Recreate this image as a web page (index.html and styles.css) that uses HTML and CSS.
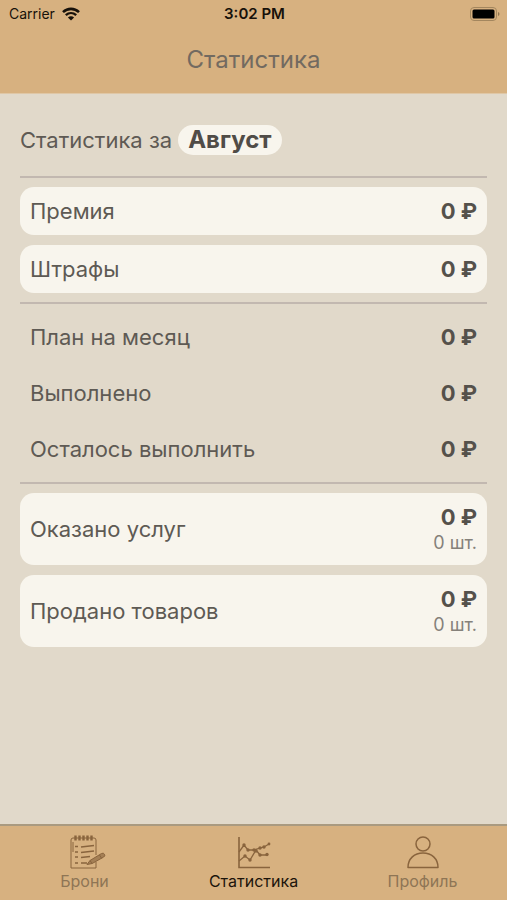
FILE: index.html
```html
<!DOCTYPE html>
<html lang="ru">
<head>
<meta charset="utf-8">
<meta name="viewport" content="width=device-width, initial-scale=1">
<title>Статистика</title>
<link rel="stylesheet" href="styles.css">
</head>
<body>
<header class="header">
  <div class="status">
    <div class="carrier">
      <span>Carrier</span>
      <svg class="wifi" viewBox="0 0 18 14" aria-hidden="true">
        <path d="M1 5.100C5.600 .8 12.400 .8 17 5.100" fill="none" stroke="currentColor" stroke-width="2.600"/>
        <path d="M3.800 8.200C6.900 5.400 11.100 5.400 14.200 8.200" fill="none" stroke="currentColor" stroke-width="2.400"/>
        <path d="M5.900 10.400C7.700 8.900 10.300 8.900 12.100 10.400L9 13.600Z" fill="currentColor"/>
      </svg>
    </div>
    <time class="clock">3:02 PM</time>
    <svg class="battery" viewBox="0 0 30 14" aria-hidden="true">
      <rect x=".5" y=".5" width="26" height="13" rx="3.500" fill="none" stroke="#a3865e"/>
      <rect x="2.500" y="2.500" width="22" height="9" rx="1.500" fill="#000"/>
      <path d="M28 5v4q1.500-.5 1.500-2T28 5Z" fill="#8f7450"/>
    </svg>
  </div>
  <h1 class="title">Статистика</h1>
</header>
<main class="content">
  <div class="period">
    <span>Статистика за</span>
    <button class="month" type="button">Август</button>
  </div>
  <section class="group">
    <div class="row card"><span>Премия</span><strong>0 ₽</strong></div>
    <div class="row card"><span>Штрафы</span><strong>0 ₽</strong></div>
  </section>
  <section class="group plan">
    <div class="row"><span>План на месяц</span><strong>0 ₽</strong></div>
    <div class="row"><span>Выполнено</span><strong>0 ₽</strong></div>
    <div class="row"><span>Осталось выполнить</span><strong>0 ₽</strong></div>
  </section>
  <section class="group">
    <div class="row card tall"><span>Оказано услуг</span><div class="totals"><strong>0 ₽</strong><small>0 шт.</small></div></div>
    <div class="row card tall"><span>Продано товаров</span><div class="totals"><strong>0 ₽</strong><small>0 шт.</small></div></div>
  </section>
</main>
<nav class="tabs">
  <a class="tab" href="#bookings">
    <svg class="icon" viewBox="0 0 36 36" fill="none" stroke="currentColor" aria-hidden="true">
      <g transform="translate(3 0)">
        <path d="M26 27v6H1V5q0-2 2-2h21q2 0 2 2v15M3 17V7"/>
        <path d="M5.500 .5v5M9.500 .5v5M13.500 .5v5M17.500 .5v5M21.500 .5v5" stroke-width="2.400"/>
        <path d="M5 11.500h3M5 17h3M5 22h3M5 28h3" stroke-width="1.600"/>
        <path d="M11 12l13-1.500M11 17.500l13-1.500M11 22.500l9-1M11 28h6" stroke-width="1.600"/>
        <path d="M17 29.500l3-4 11.500-7q2-1 3 .8t-.8 2.700l-11.500 6.500Z" fill="currentColor" fill-opacity=".65"/>
        <path d="M29.500 20l2.200 3.500M20 25.500l2 3"/>
      </g>
    </svg>
    <span>Брони</span>
  </a>
  <a class="tab active" href="#stats" aria-current="page">
    <svg class="icon" viewBox="0 0 36 36" fill="none" stroke="currentColor" aria-hidden="true">
      <path d="M3 2v30.500h31" stroke-width="1.600"/>
      <path d="M3 17l5-7 4 5h6l6-2 4-1 5-3M3 26l6-5 5 4 6-10 4 5h7" stroke-width="1.300"/>
      <g fill="currentColor" stroke="none"><circle cx="8" cy="10" r="1.700"/><circle cx="12" cy="15" r="1.700"/><circle cx="18" cy="15" r="1.700"/><circle cx="24" cy="13" r="1.700"/><circle cx="28" cy="12" r="1.700"/><circle cx="33" cy="9" r="1.400"/><circle cx="9" cy="21" r="1.700"/><circle cx="14" cy="25" r="1.700"/><circle cx="20" cy="16" r="1.700"/><circle cx="24" cy="20" r="1.700"/><circle cx="31" cy="19.500" r="1.700"/></g>
    </svg>
    <span>Статистика</span>
  </a>
  <a class="tab" href="#profile">
    <svg class="icon" viewBox="0 0 36 36" fill="none" stroke="currentColor" stroke-width="1.500" aria-hidden="true">
      <circle cx="18" cy="9" r="7"/>
      <path d="M3 32.500C3 23.500 9.500 18 18 18S33 23.500 33 32.500Z" stroke-linejoin="round"/>
    </svg>
    <span>Профиль</span>
  </a>
</nav>
</body>
</html>
```
FILE: styles.css
```css
* { box-sizing: border-box; }

body {
  margin: 0;
  min-height: 100vh;
  display: flex;
  flex-direction: column;
  background: #e1d9ca;
  color: #5e5a54;
  font-family: Inter, "Liberation Sans", sans-serif;
  font-size: 22px;
  line-height: 28px;
}

.header {
  background: #d7b180;
  border-bottom: 1px solid #dfc7a6;
}

.status {
  display: grid;
  grid-template-columns: 1fr auto 1fr;
  align-items: center;
  height: 28px;
  padding: 0 7px 0 9px;
  color: #17110a;
  font-size: 14px;
  line-height: 20px;
}

.carrier { display: flex; align-items: center; gap: 7px; }
.wifi { width: 18px; height: 14px; }
.clock { font-size: 15px; font-weight: 600; }
.battery { width: 30px; height: 14px; justify-self: end; }

.title {
  margin: 0;
  padding: 18px 0 19px;
  color: #726a60;
  font-size: 24px;
  font-weight: 400;
  text-align: center;
}

.content {
  flex: 1;
  padding: 31px 20px 0;
}

.period {
  display: flex;
  align-items: center;
  gap: 6px;
  height: 30px;
  margin-bottom: 21px;
}

.month {
  padding: 0 10px;
  border: 0;
  border-radius: 15px;
  background: #f8f5ed;
  color: #504c47;
  font: inherit;
  font-size: 24px;
  font-weight: 700;
  line-height: 30px;
}

.group {
  display: flex;
  flex-direction: column;
  gap: 10px;
  padding: 9px 0;
  border-top: 2px solid #c2b8b0;
}

.row {
  display: flex;
  align-items: center;
  justify-content: space-between;
  padding: 10px;
}

.card {
  border-radius: 14px;
  background: #f8f5ed;
}

.row strong { color: #55514b; font-weight: 700; }

.plan { gap: 8px; }

.totals {
  display: flex;
  flex-direction: column;
  align-items: flex-end;
}

.totals small {
  color: #85817a;
  font-size: 18px;
  line-height: 24px;
}

.tabs {
  display: grid;
  grid-template-columns: repeat(3, 1fr);
  height: 76px;
  border-top: 2px solid #a99a80;
  background: #d7b180;
}

.tab {
  display: flex;
  flex-direction: column;
  align-items: center;
  padding-top: 9px;
  color: #8e7555;
  font-size: 16px;
  line-height: 20px;
  text-decoration: none;
}

.icon { width: 36px; height: 36px; overflow: visible; color: #89643d; }
.active { color: #1c140b; }
```
